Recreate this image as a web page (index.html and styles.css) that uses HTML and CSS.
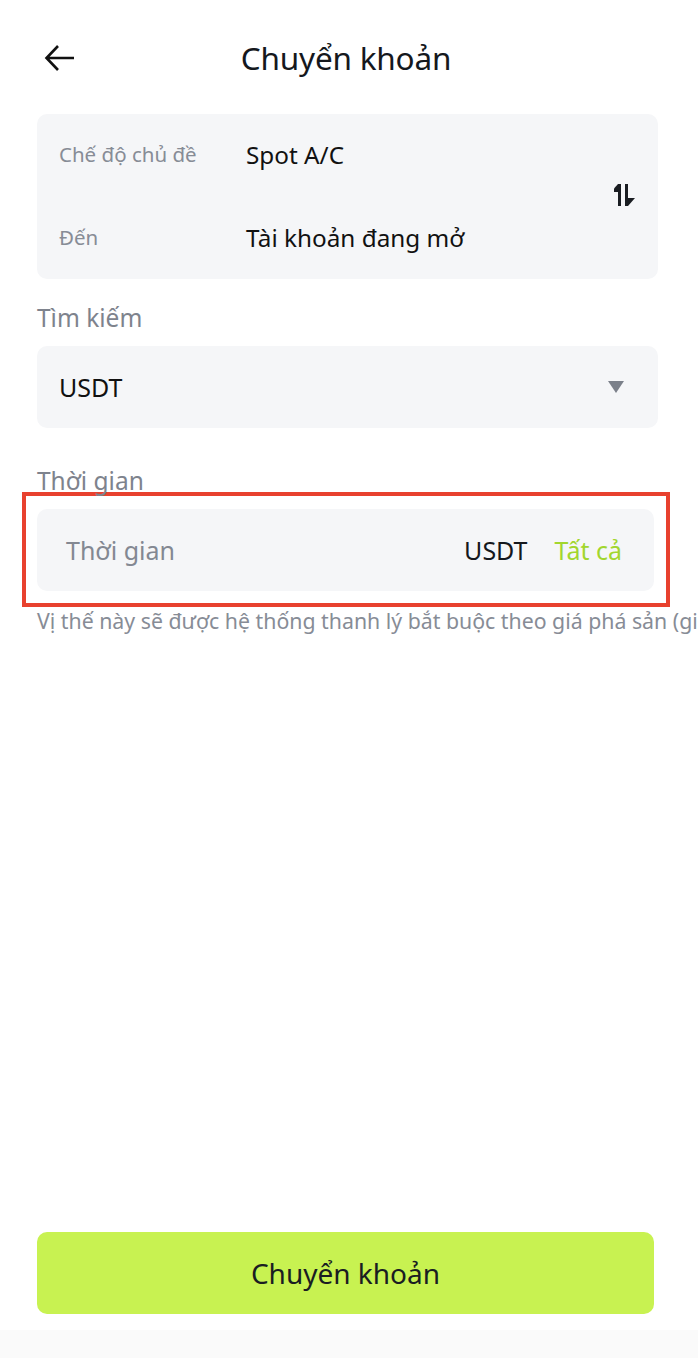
FILE: index.html
```html
<!DOCTYPE html>
<html lang="vi">
<head>
  <meta charset="UTF-8" />
  <meta name="viewport" content="width=device-width, initial-scale=1.0"/>
  <title>Chuyển khoản</title>
  <link rel="stylesheet" href="styles.css">
</head>
<body>

  <header class="topbar">
    <button class="back" aria-label="Quay lại">
      <svg width="32" height="28" viewBox="0 0 32 28"><path d="M30 14H3M14 2L2.5 14L14 26" fill="none" stroke="#111" stroke-width="2.6" stroke-linejoin="miter"/></svg>
    </button>
    <h1>Chuyển khoản</h1>
  </header>

  <main>
    <section class="accounts">
      <div class="acc-rows">
        <div class="acc-row">
          <span class="acc-label">Chế độ chủ đề</span>
          <span class="acc-value">Spot A/C</span>
        </div>
        <div class="acc-row">
          <span class="acc-label">Đến</span>
          <span class="acc-value">Tài khoản đang mở</span>
        </div>
      </div>
      <svg class="swap" width="22" height="24" viewBox="0 0 22 24"><rect x="4" y="1" width="3" height="22" fill="#1a1d22"/><rect x="11" y="1" width="3" height="22" fill="#1a1d22"/><path d="M14 23L21 15H14Z" fill="#1a1d22"/><path d="M4 1L-3 9H4Z" fill="#1a1d22"/></svg>
    </section>

    <p class="field-label">Tìm kiếm</p>
    <div class="select">
      <span>USDT</span>
      <span class="caret"></span>
    </div>

    <p class="field-label time-label">Thời gian</p>
    <div class="highlight">
      <div class="amount">
        <span class="placeholder">Thời gian</span>
        <span class="unit">USDT</span>
        <span class="all">Tất cả</span>
      </div>
    </div>
    <p class="hint">Vị thế này sẽ được hệ thống thanh lý bắt buộc theo giá phá sản (giá thanh lý)</p>
  </main>

  <div class="bottom">
    <button class="submit">Chuyển khoản</button>
  </div>
  <div class="home-bar"></div>

</body>
</html>
```

FILE: styles.css
```css
*{margin:0;padding:0;box-sizing:border-box}
html,body{height:100%}
body{font-family:"Noto Sans",sans-serif;background:#fff;color:#15181d;display:flex;flex-direction:column;overflow-x:hidden;width:698px}
.topbar{height:114px;display:flex;align-items:center;justify-content:center;position:relative;padding-right:6px}
.topbar h1{font-size:31.5px;font-weight:400;letter-spacing:-0.2px}
.back{position:absolute;left:44px;top:44px;background:none;border:none;width:32px;height:28px}
.back svg{display:block}
main{flex:1;padding:0 40px 0 37px;overflow:hidden}
.accounts{background:#f5f6f8;border-radius:10px;height:165px;display:flex;align-items:center;padding:0 22px 0 22px}
.acc-rows{flex:1;display:flex;flex-direction:column;gap:51px;padding-bottom:2px}
.acc-row{display:flex;align-items:center;height:32px}
.acc-label{width:187px;font-size:20.5px;color:#878c96}
.acc-value{font-size:24.3px;color:#111}
.swap{display:block;margin-top:-4px;margin-right:0}
.field-label{font-size:24.5px;color:#7e838d;margin-top:23px;height:32px;line-height:32px}
.select{margin-top:12px;height:82px;background:#f5f6f8;border-radius:10px;display:flex;align-items:center;justify-content:space-between;padding:0 34px 0 22px;font-size:25px;color:#111}
.caret{width:0;height:0;border-left:8.5px solid transparent;border-right:8.5px solid transparent;border-top:12px solid #7b808a}
.time-label{margin-top:37px;height:27px;line-height:32px}
.highlight{margin:0 -12px 0 -15px;border:4px solid #e8412e;padding:13px 12px 12px 11px}
.amount{height:82px;background:#f5f6f8;border-radius:10px;display:flex;align-items:center;padding:0 32px 0 29px;font-size:25px}
.placeholder{flex:1;color:#838892}
.unit{color:#15181d;margin-right:27px}
.all{color:#a2d62e}
.hint{margin-top:0;line-height:28px;font-size:21.3px;color:#878c96;white-space:nowrap;margin-right:-80px}
.bottom{padding:0 44px 16px 37px}
.submit{width:100%;height:82px;border:none;border-radius:10px;background:#c8f251;color:#1a1d22;font-family:inherit;font-size:28px}
.home-bar{height:28px;background:#fafafa}
```
